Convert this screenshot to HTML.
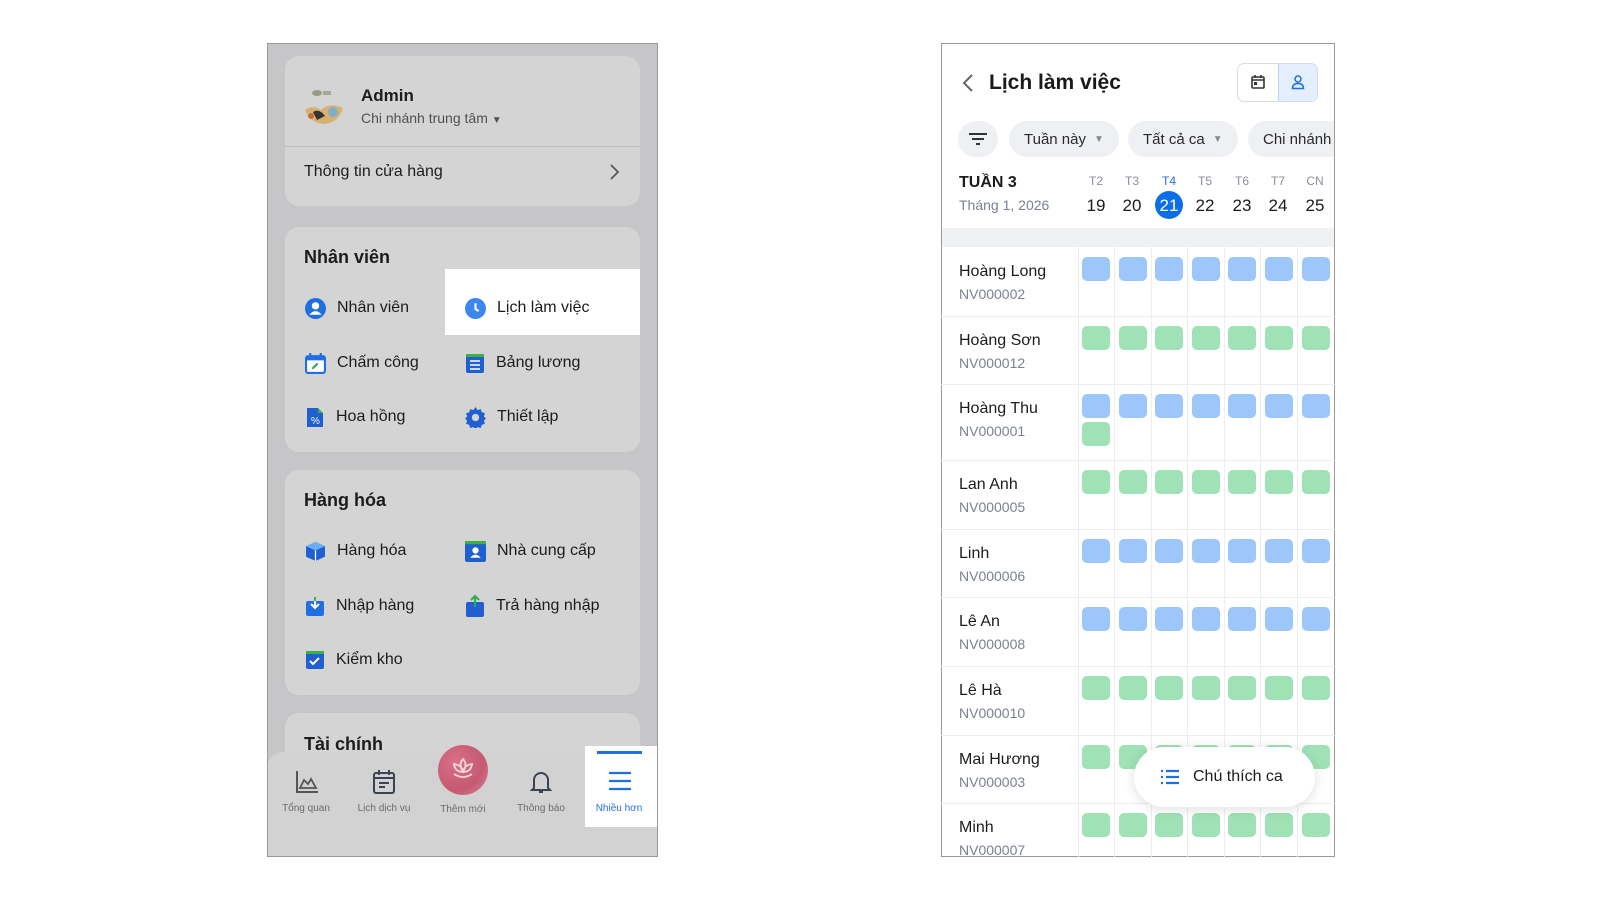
<!DOCTYPE html>
<html><head><meta charset="utf-8"><style>
*{box-sizing:border-box;margin:0;padding:0}
body{width:1600px;height:900px;background:#fff;font-family:"Liberation Sans","DejaVu Sans",sans-serif;position:relative;overflow:hidden;color:#1c1c1e}
.a{position:absolute}
.ph{position:absolute;overflow:hidden;border:1px solid #9a9a9a}
.card{position:absolute;background:#d4d4d4;border-radius:14px}
.t16{font-size:16px}
.it{position:absolute;font-size:16px;display:flex;align-items:center;height:24px}
.it svg{margin-right:11px}
.nav{position:absolute;font-size:10px;color:#6b6b6b;text-align:center;width:70px}
.blk{position:absolute;width:28px;height:24px;border-radius:5px}
.b{background:#9dc7fa}.g{background:#9fe2b5}
.vl{position:absolute;width:1px;background:#eceef1;top:247px;height:610px}
.hl{position:absolute;height:1px;background:#eceef1;left:941px;width:394px}
.nm{position:absolute;left:959px;font-size:16px;color:#1c1c1e}
.cd{position:absolute;left:959px;font-size:14px;color:#7b8190}
.dl{position:absolute;font-size:12px;color:#8a8f98;width:30px;text-align:center;top:174px}
.dn{position:absolute;font-size:17px;color:#1c1c1e;width:30px;text-align:center;top:196px}
.chip{position:absolute;top:121px;height:36px;border-radius:18px;background:#eef0f3;font-size:15px;display:flex;align-items:center;padding-left:15px;color:#2a2a2a;white-space:nowrap;overflow:hidden}
</style></head><body>

<!-- LEFT PHONE -->
<div class="ph" style="left:267px;top:43px;width:391px;height:814px;background:#c6c6c8">
</div>
<div class="card" style="left:285px;top:56px;width:355px;height:150px"></div>
<div class="a" style="left:285px;top:146px;width:355px;height:1px;background:#bdbdbd"></div>
<svg class="a" style="left:303px;top:88px" width="44" height="40" viewBox="0 0 44 40"><ellipse cx="14" cy="5" rx="5" ry="3" fill="#9a9a8a"/><rect x="20" y="3" width="8" height="4" fill="#a8a898"/><path d="M2 22 Q10 16 18 22 Q26 14 40 20 Q36 34 22 36 Q8 36 2 22Z" fill="#d8b070"/><path d="M10 24 Q16 20 22 28 L14 32Z" fill="#333"/><circle cx="30" cy="24" r="5" fill="#7ab0c8"/><circle cx="8" cy="28" r="3" fill="#c86a3a"/></svg>
<div class="a" style="left:361px;top:86px;font-size:17px;font-weight:bold">Admin</div>
<div class="a" style="left:361px;top:110px;font-size:14px;color:#505050">Chi nhánh trung tâm <span style="font-size:10px">▼</span></div>
<div class="a t16" style="left:304px;top:163px">Thông tin cửa hàng</div>
<svg class="a" style="left:608px;top:163px" width="12" height="18" viewBox="0 0 12 18"><path d="M3 2l7 7-7 7" fill="none" stroke="#555" stroke-width="1.8"/></svg>

<div class="card" style="left:285px;top:227px;width:355px;height:225px"></div>
<div class="a" style="left:445px;top:269px;width:195px;height:66px;background:#fff"></div>
<div class="a" style="left:304px;top:247px;font-size:18px;font-weight:bold">Nhân viên</div>
<div class="it" style="left:305px;top:296px"><svg width="21" height="21" viewBox="0 0 20 20"><circle cx="10" cy="10" r="10" fill="#1f6fe0"/><circle cx="10" cy="7.5" r="3.5" fill="#fff"/><path d="M4 16 Q10 9 16 16" fill="#fff"/></svg>Nhân viên</div>
<div class="it" style="left:465px;top:296px"><svg width="21" height="21" viewBox="0 0 20 20"><circle cx="10" cy="10" r="10" fill="#3b86f0"/><path d="M10 5v5.5l3 2" stroke="#fff" stroke-width="2" fill="none"/></svg>Lịch làm việc</div>
<div class="it" style="left:305px;top:351px"><svg width="21" height="21" viewBox="0 0 20 20"><rect x="1" y="3" width="18" height="16" rx="2" fill="#fff" stroke="#1f6fe0" stroke-width="2"/><rect x="1" y="3" width="18" height="4" fill="#1f6fe0"/><rect x="4" y="0" width="2" height="4" fill="#1f6fe0"/><rect x="14" y="0" width="2" height="4" fill="#1f6fe0"/><path d="M7 15l5-5" stroke="#2fa84f" stroke-width="2"/></svg>Chấm công</div>
<div class="it" style="left:465px;top:351px"><svg width="20" height="21" viewBox="0 0 20 21"><rect x="1" y="1" width="18" height="19" rx="2" fill="#1f5fd0"/><rect x="1" y="1" width="18" height="3" fill="#3cb04a"/><path d="M5 8h10M5 12h10M5 16h10" stroke="#fff" stroke-width="1.6"/></svg>Bảng lương</div>
<div class="it" style="left:305px;top:405px"><svg width="20" height="21" viewBox="0 0 20 21"><path d="M2 1h11l5 5v14H2z" fill="#1f5fd0"/><path d="M13 1v5h5z" fill="#3cb04a"/><text x="6" y="17" font-size="10" fill="#fff" font-family="Liberation Sans">%</text></svg>Hoa hồng</div>
<div class="it" style="left:465px;top:405px"><svg width="21" height="21" viewBox="0 0 20 20"><path d="M10 0l2 3 3-1 1 3 3 1-1 3 2 2-2 2 1 3-3 1-1 3-3-1-2 3-2-3-3 1-1-3-3-1 1-3-2-2 2-2-1-3 3-1 1-3 3 1z" fill="#1f5fd0"/><circle cx="10" cy="10" r="3.5" fill="#d4d4d4"/></svg>Thiết lập</div>

<div class="card" style="left:285px;top:470px;width:355px;height:225px"></div>
<div class="a" style="left:304px;top:490px;font-size:18px;font-weight:bold">Hàng hóa</div>
<div class="it" style="left:305px;top:539px"><svg width="21" height="21" viewBox="0 0 20 20"><path d="M10 1l9 4v10l-9 4-9-4V5z" fill="#1f5fd0"/><path d="M1 5l9 4 9-4-9-4z" fill="#6aaef5"/><path d="M10 9v10" stroke="#fff" stroke-width="1.2"/></svg>Hàng hóa</div>
<div class="it" style="left:465px;top:539px"><svg width="21" height="21" viewBox="0 0 20 20"><rect x="0" y="0" width="20" height="20" rx="2" fill="#1f5fd0"/><rect x="0" y="0" width="20" height="3" fill="#3cb04a"/><circle cx="10" cy="9" r="3" fill="#fff"/><path d="M5 16q5-6 10 0z" fill="#fff"/></svg>Nhà cung cấp</div>
<div class="it" style="left:305px;top:594px"><svg width="20" height="21" viewBox="0 0 20 21"><rect x="1" y="5" width="18" height="15" rx="2" fill="#1f6fe0"/><path d="M10 1v11M6 8l4 4 4-4" stroke="#fff" stroke-width="2" fill="none"/><path d="M10 1v4" stroke="#3cb04a" stroke-width="2"/></svg>Nhập hàng</div>
<div class="it" style="left:465px;top:594px"><svg width="20" height="22" viewBox="0 0 20 22"><rect x="1" y="7" width="18" height="15" rx="2" fill="#1f5fd0"/><path d="M10 12V1M6 5l4-4 4 4" stroke="#2fa84f" stroke-width="2" fill="none"/></svg>Trả hàng nhập</div>
<div class="it" style="left:305px;top:648px"><svg width="20" height="20" viewBox="0 0 20 20"><rect x="1" y="1" width="18" height="18" rx="2" fill="#1f5fd0"/><rect x="1" y="1" width="18" height="3" fill="#3cb04a"/><path d="M5 11l3 3 6-6" stroke="#fff" stroke-width="2" fill="none"/></svg>Kiểm kho</div>

<div class="card" style="left:285px;top:713px;width:355px;height:120px"></div>
<div class="a" style="left:304px;top:734px;font-size:18px;font-weight:bold">Tài chính</div>
<div class="a" style="left:268px;top:752px;width:389px;height:104px;background:#d2d2d3;border-radius:14px 14px 0 0"></div>
<div class="a" style="left:585px;top:746px;width:72px;height:81px;background:#fff"></div>
<div class="a" style="left:597px;top:751px;width:45px;height:3px;background:#1f6fe0"></div>
<svg class="a" style="left:294px;top:769px" width="26" height="26" viewBox="0 0 26 26"><path d="M3 2v21h21" stroke="#555" stroke-width="2" fill="none"/><path d="M6 19l4-8 4 4 3-5 5 9z" fill="none" stroke="#555" stroke-width="1.8"/></svg>
<svg class="a" style="left:372px;top:769px" width="24" height="26" viewBox="0 0 24 26"><rect x="2" y="4" width="20" height="20" rx="2" fill="none" stroke="#3a4450" stroke-width="2"/><path d="M2 9h20M7 1v5M17 1v5M7 14h10M7 18h6" stroke="#3a4450" stroke-width="2"/></svg>
<div class="a" style="left:438px;top:745px;width:50px;height:50px;border-radius:50%;background:radial-gradient(circle at 35% 35%,#d87088,#c55a72 60%,#d68a96)"></div>
<svg class="a" style="left:450px;top:756px" width="26" height="26" viewBox="0 0 26 26"><path d="M13 3q5 5 0 13q-5-8 0-13zM4 8q8 1 9 8q-8 0-9-8zM22 8q-8 1-9 8q8 0 9-8zM4 18q9 6 18 0" fill="none" stroke="#f6d5da" stroke-width="1.8"/></svg>
<svg class="a" style="left:530px;top:769px" width="22" height="26" viewBox="0 0 22 26"><path d="M4 19V11a7 7 0 0114 0v8l2 2H2z" fill="none" stroke="#3a4450" stroke-width="2"/><path d="M9 23h4" stroke="#3a4450" stroke-width="2"/></svg>
<svg class="a" style="left:608px;top:771px" width="24" height="20" viewBox="0 0 24 20"><path d="M1 2h22M1 10h22M1 18h22" stroke="#1f6fe0" stroke-width="2.2"/></svg>
<div class="nav" style="left:271px;top:803px">Tổng quan</div>
<div class="nav" style="left:349px;top:803px">Lịch dịch vụ</div>
<div class="nav" style="left:428px;top:804px">Thêm mới</div>
<div class="nav" style="left:506px;top:803px">Thông báo</div>
<div class="nav" style="left:584px;top:803px;color:#1f6fe0">Nhiều hơn</div>

<!-- RIGHT PHONE -->
<div class="ph" style="left:941px;top:43px;width:394px;height:814px;background:#fff"></div>
<svg class="a" style="left:962px;top:73px" width="12" height="20" viewBox="0 0 12 20"><path d="M10 2L2 10l8 8" fill="none" stroke="#666" stroke-width="2"/></svg>
<div class="a" style="left:989px;top:71px;font-size:21px;font-weight:bold;color:#1a1a1a">Lịch làm việc</div>
<div class="a" style="left:1237px;top:63px;width:81px;height:39px;border:1px solid #d8dbe0;border-radius:7px;overflow:hidden"><div class="a" style="left:40px;top:0;width:41px;height:39px;background:#e4effd;border-left:1px solid #b9d3f6"></div></div>
<svg class="a" style="left:1251px;top:75px" width="14" height="14" viewBox="0 0 14 14"><rect x="1" y="2" width="12" height="11" rx="1" fill="none" stroke="#333" stroke-width="1.6"/><path d="M1 5h12M4 0v3M10 0v3" stroke="#333" stroke-width="1.6"/><rect x="3" y="7" width="3" height="3" fill="#333"/></svg>
<svg class="a" style="left:1291px;top:74px" width="14" height="16" viewBox="0 0 14 16"><circle cx="7" cy="5" r="3" fill="none" stroke="#1f6fe0" stroke-width="1.5"/><path d="M1.5 14.5q0-5 5.5-5t5.5 5z" fill="none" stroke="#1f6fe0" stroke-width="1.5"/></svg>

<div class="a" style="left:958px;top:121px;width:40px;height:36px;border-radius:18px;background:#eef0f3"></div>
<svg class="a" style="left:968px;top:132px" width="20" height="14" viewBox="0 0 20 14"><path d="M1 2h18M4 7h12M8 12h4" stroke="#333" stroke-width="2"/></svg>
<div class="chip" style="left:1009px;width:110px">Tuần này <span style="font-size:10px;color:#888;margin-left:8px">▼</span></div>
<div class="chip" style="left:1128px;width:110px">Tất cả ca <span style="font-size:10px;color:#888;margin-left:8px">▼</span></div>
<div class="chip" style="left:1248px;width:86px;border-radius:18px 0 0 18px">Chi nhánh</div>

<div class="a" style="left:959px;top:174px;font-size:16px;font-weight:bold">TUẦN 3</div>
<div class="a" style="left:959px;top:197px;font-size:14px;color:#7b8190">Tháng 1, 2026</div>
<div class="a" style="left:1155px;top:191px;width:28px;height:28px;border-radius:50%;background:#0d6ee8"></div>
<div class="dl" style="left:1081px">T2</div><div class="dn" style="left:1081px">19</div>
<div class="dl" style="left:1117px">T3</div><div class="dn" style="left:1117px">20</div>
<div class="dl" style="left:1154px;color:#1f6fe0">T4</div><div class="dn" style="left:1154px;color:#fff">21</div>
<div class="dl" style="left:1190px">T5</div><div class="dn" style="left:1190px">22</div>
<div class="dl" style="left:1227px">T6</div><div class="dn" style="left:1227px">23</div>
<div class="dl" style="left:1263px">T7</div><div class="dn" style="left:1263px">24</div>
<div class="dl" style="left:1300px">CN</div><div class="dn" style="left:1300px">25</div>

<div class="a" style="left:942px;top:228px;width:392px;height:19px;background:#f0f1f3"></div>

<div class="vl" style="left:1078px"></div><div class="vl" style="left:1114px"></div><div class="vl" style="left:1151px"></div><div class="vl" style="left:1187px"></div><div class="vl" style="left:1224px"></div><div class="vl" style="left:1260px"></div><div class="vl" style="left:1297px"></div>
<div class="hl" style="top:316px"></div><div class="hl" style="top:384px"></div><div class="hl" style="top:460px"></div><div class="hl" style="top:529px"></div><div class="hl" style="top:597px"></div><div class="hl" style="top:666px"></div><div class="hl" style="top:735px"></div><div class="hl" style="top:803px"></div>

<div id="rows"></div>
<script>
var rows=[["Hoàng Long","NV000002",247,"b"],["Hoàng Sơn","NV000012",316,"g"],["Hoàng Thu","NV000001",384,"b"],["Lan Anh","NV000005",460,"g"],["Linh","NV000006",529,"b"],["Lê An","NV000008",597,"b"],["Lê Hà","NV000010",666,"g"],["Mai Hương","NV000003",735,"g"],["Minh","NV000007",803,"g"]];
var h="";rows.forEach(function(r){h+='<div class="nm" style="top:'+(r[2]+16)+'px">'+r[0]+'</div><div class="cd" style="top:'+(r[2]+39)+'px">'+r[1]+'</div>';
for(var i=0;i<7;i++){h+='<div class="blk '+r[3]+'" style="left:'+(1082+i*36.6)+'px;top:'+(r[2]+10)+'px"></div>';}});
h+='<div class="blk g" style="left:1082px;top:422px"></div>';
document.getElementById("rows").outerHTML=h;
</script>
<div class="a" style="left:941px;top:857px;width:394px;height:43px;background:#fff"></div>
<div class="a" style="left:1335px;top:40px;width:265px;height:860px;background:#fff"></div>

<div class="a" style="left:1134px;top:747px;width:181px;height:60px;border-radius:30px;background:#fff;box-shadow:0 2px 12px rgba(0,0,0,0.13)"></div>
<svg class="a" style="left:1160px;top:769px" width="20" height="16" viewBox="0 0 20 16"><path d="M1 2h2M1 8h2M1 14h2M6 2h13M6 8h13M6 14h13" stroke="#1f6fe0" stroke-width="2.2"/></svg>
<div class="a" style="left:1193px;top:768px;font-size:16px;color:#1c1c1e">Chú thích ca</div>
</body></html>
